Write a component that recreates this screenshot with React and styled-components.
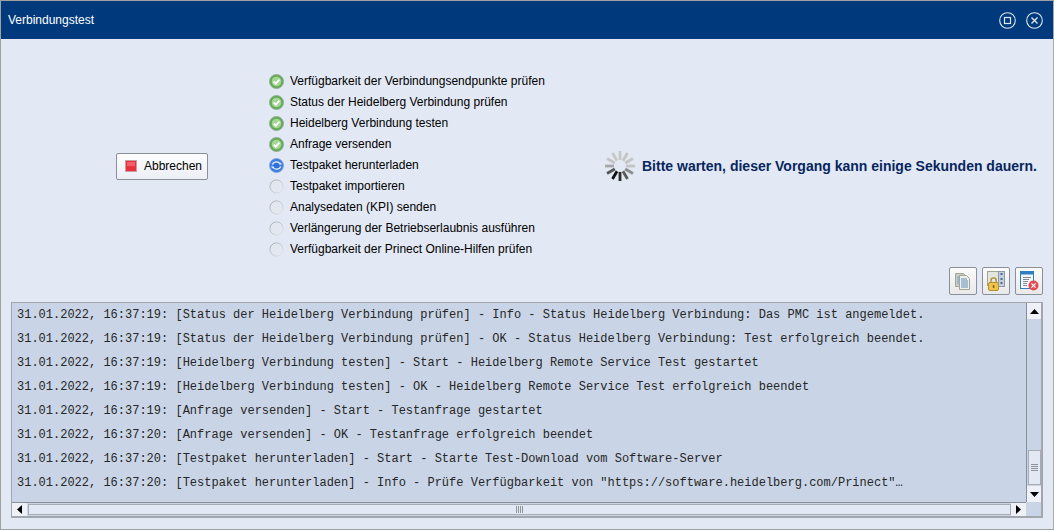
import styled, { createGlobalStyle } from "styled-components"

const GlobalStyle = createGlobalStyle`
  html, body {
    margin: 0;
    padding: 0;
    background: #e2e8f4;
  }
  * {
    box-sizing: border-box;
  }
`

const Window = styled.div`
  width: 1054px;
  height: 530px;
  display: flex;
  flex-direction: column;
  background: #e2e8f4;
  border: 1px solid #a0a0a0;
  border-right-color: #a8a8a8;
  font-family: "Liberation Sans", Arial, sans-serif;
  overflow: hidden;
`

const TitleBar = styled.div`
  height: 38px;
  flex: none;
  background: #003a7c;
  display: flex;
  align-items: center;
  justify-content: space-between;
  padding: 0 10px 0 7px;
  color: #fff;
  font-size: 12px;
`

const Title = styled.div`
  margin-top: -1px;
`

const WindowButtons = styled.div`
  display: flex;
  gap: 10px;
  margin-top: 1px;
`

const Top = styled.div`
  height: 228px;
  flex: none;
  display: flex;
  align-items: center;
  padding-top: 24px;
`

const ButtonCell = styled.div`
  width: 268px;
  flex: none;
  padding: 2px 0 0 115px;
`

const CancelButton = styled.button`
  width: 92px;
  height: 27px;
  display: flex;
  align-items: center;
  gap: 7px;
  padding: 0 0 0 8px;
  background: linear-gradient(#fdfdfe, #eceff5);
  border: 1px solid #8b8f98;
  border-radius: 2px;
  font: 12px "Liberation Sans", Arial, sans-serif;
  color: #000;
`

const Steps = styled.ul`
  list-style: none;
  margin: 0;
  padding: 0;
  width: 335px;
  flex: none;
  display: flex;
  flex-direction: column;
`

const Step = styled.li`
  height: 21px;
  display: flex;
  align-items: center;
  gap: 6px;
  font-size: 12px;
  color: #000;
  white-space: nowrap;
`

const Waiting = styled.div`
  display: flex;
  align-items: center;
  gap: 6px;
  margin-top: 2px;
  font-size: 14px;
  font-weight: bold;
  color: #08265e;
  white-space: nowrap;
`

const Toolbar = styled.div`
  display: flex;
  justify-content: flex-end;
  gap: 5px;
  padding-right: 10px;
  height: 35px;
  flex: none;
`

const ToolButton = styled.button`
  width: 28px;
  height: 28px;
  padding: 0;
  display: grid;
  place-items: center;
  background: linear-gradient(#fbfbfc, #e9e9ea);
  border: 1px solid #8b8f98;
  border-radius: 2px;
`

const LogBox = styled.div`
  margin-left: 10px;
  width: 1032px;
  height: 216px;
  flex: none;
  display: grid;
  grid-template-columns: 1fr 15px;
  grid-template-rows: 1fr 14px;
  background: #c9d5e6;
  border: 1px solid #a3a7ad;
  border-width: 1px 2px 2px 1px;
`

const LogLines = styled.div`
  overflow: hidden;
  padding: 1px 0 0 5px;
`

const LogLine = styled.div`
  height: 24px;
  line-height: 23px;
  font-family: "Liberation Mono", "Courier New", monospace;
  font-size: 12px;
  color: #262626;
  white-space: pre;
`

const VScroll = styled.div`
  display: flex;
  flex-direction: column;
  background: #c9d5e6;
  border-left: 1px solid #8b8f98;
`

const HScroll = styled.div`
  display: flex;
  background: #c9d5e6;
  border-top: 1px solid #8b8f98;
`

const Corner = styled.div`
  background: #c9d5e6;
`

const Arrow = styled.div`
  flex: none;
  width: ${(p) => (p.$horizontal ? "15px" : "auto")};
  height: ${(p) => (p.$horizontal ? "auto" : "16px")};
  background: #eef1f7;
  display: grid;
  place-items: center;
`

const Track = styled.div`
  flex: 1;
  display: flex;
  flex-direction: ${(p) => (p.$horizontal ? "row" : "column")};
  justify-content: flex-end;
  min-width: 0;
`

const Thumb = styled.div`
  flex: ${(p) => (p.$horizontal ? "1" : "none")};
  height: ${(p) => (p.$horizontal ? "auto" : "35px")};
  margin: ${(p) => (p.$horizontal ? "1px 0 1px 1px" : "0 0 1px 1px")};
  background: #e2e8f4;
  border: 1px solid #a9adb3;
  display: flex;
  flex-direction: ${(p) => (p.$horizontal ? "row" : "column")};
  align-items: center;
  justify-content: center;
  gap: 1px;
`

const Grip = styled.i`
  display: block;
  background: #8f939a;
  width: ${(p) => (p.$horizontal ? "1px" : "7px")};
  height: ${(p) => (p.$horizontal ? "7px" : "1px")};
`

const RestoreIcon = () => (
  <svg width="17" height="17" viewBox="0 0 17 17" fill="none" stroke="#dfe7f2">
    <circle cx="8.5" cy="8.5" r="7.8" strokeWidth="1.1" />
    <rect x="5.5" y="5.5" width="6" height="6" strokeWidth="1.2" />
  </svg>
)

const CloseIcon = () => (
  <svg width="17" height="17" viewBox="0 0 17 17" fill="none" stroke="#dfe7f2">
    <circle cx="8.5" cy="8.5" r="7.8" strokeWidth="1.1" />
    <path d="M5.5 5.5l6 6M11.5 5.5l-6 6" strokeWidth="1.4" />
  </svg>
)

const StopIcon = () => (
  <svg width="12" height="12" viewBox="0 0 12 12">
    <rect x="0.5" y="0.5" width="11" height="11" fill="#e8303f" stroke="#c8a0a4" />
    <rect x="2" y="2" width="8" height="4" fill="#f0606c" />
  </svg>
)

const DoneIcon = () => (
  <svg width="15" height="15" viewBox="0 0 15 15">
    <circle cx="7.5" cy="7.5" r="7" fill="#62ad52" stroke="#8fa596" strokeWidth="0.8" />
    <circle cx="7.5" cy="7.5" r="4.8" fill="#a5d698" />
    <path d="M4.7 7.6l2.1 2.1 3.6-4.1" fill="none" stroke="#fff" strokeWidth="1.9" />
  </svg>
)

const RunningIcon = () => (
  <svg width="15" height="15" viewBox="0 0 15 15">
    <circle cx="7.5" cy="7.5" r="7" fill="#3f7ee0" stroke="#7f9fd8" strokeWidth="0.8" />
    <circle cx="7.5" cy="7.5" r="2.6" fill="#2f6ed6" />
    <path d="M3.2 6.6a4.5 4.5 0 0 1 8-0.6M11.8 8.4a4.5 4.5 0 0 1-8 0.6" fill="none" stroke="#e6f0fd" strokeWidth="1.3" />
    <path d="M10 6.6h3l-1.5-2zM5 8.4h-3l1.5 2z" fill="#e6f0fd" />
  </svg>
)

const PendingIcon = () => (
  <svg width="15" height="15" viewBox="0 0 15 15">
    <defs>
      <linearGradient id="pendingRing" x1="0" y1="0" x2="1" y2="1">
        <stop offset="0" stopColor="#a6a8ac" />
        <stop offset="1" stopColor="#e4e7ee" />
      </linearGradient>
    </defs>
    <circle cx="7.5" cy="7.5" r="6.6" fill="#e3e7ef" stroke="url(#pendingRing)" strokeWidth="1" />
  </svg>
)

const spokes = ["#c4c4c4", "#c4c4c4", "#c4c4c4", "#8c8c8c", "#5a5a5a", "#2c2c2c", "#111", "#555", "#a8a8a8", "#c4c4c4", "#c8c8c8", "#c8c8c8"]

const Spinner = () => (
  <svg width="32" height="32" viewBox="0 0 32 32">
    {spokes.map((color, i) => (
      <rect key={i} x="14.6" y="1" width="2.8" height="9" fill={color} transform={`rotate(${i * 30 + 30} 16 16)`} />
    ))}
  </svg>
)

const CopyIcon = () => (
  <svg width="18" height="18" viewBox="0 0 18 18">
    <path d="M1.5 1.5h8l2 2v11h-10z" fill="#c5cdd3" stroke="#a5a68f" />
    <path d="M5.5 3.5h7l3 3v11h-10z" fill="#eef0f0" stroke="#a5a68f" />
    <path d="M7 7h6M7 9h7M7 11h7M7 13h7M7 15h7" stroke="#5f8bb5" strokeWidth="1" />
    <path d="M3 5h2M3 7h2M3 9h2M3 11h2" stroke="#7ba0c4" strokeWidth="1" />
  </svg>
)

const LockIcon = () => (
  <svg width="20" height="20" viewBox="0 0 20 20">
    <rect x="1.5" y="0.5" width="12" height="14" fill="#e4e6dd" stroke="#a5a68f" />
    <rect x="12.5" y="0.5" width="6" height="15" fill="#c3cede" stroke="#8d99ab" />
    <rect x="14.5" y="2" width="2" height="2" fill="#4c6a94" />
    <rect x="14.5" y="7" width="2" height="2" fill="#4c6a94" />
    <rect x="14.5" y="11" width="2" height="2" fill="#4c6a94" />
    <path d="M5 12V9.5a2.6 2.6 0 0 1 5.2 0V12" fill="none" stroke="#a68b35" strokeWidth="1.3" />
    <rect x="2.5" y="11.5" width="10" height="8" rx="1.5" fill="#eec44f" stroke="#b48f2a" />
    <rect x="6.8" y="14" width="1.6" height="3" fill="#8a6a14" />
  </svg>
)

const ClearIcon = () => (
  <svg width="20" height="20" viewBox="0 0 20 20">
    <rect x="1.5" y="0.5" width="13" height="17" fill="#f5f7f9" stroke="#2f7fc0" />
    <rect x="1.5" y="0.5" width="13" height="3" fill="#2f7fc0" />
    <path d="M4 6.5h8M4 8.5h6M4 10.5h5M4 12.5h4M4 14.5h4" stroke="#7f8a96" />
    <circle cx="14.5" cy="14.5" r="5" fill="#e8474f" />
    <path d="M12.4 12.4l4.2 4.2M16.6 12.4l-4.2 4.2" stroke="#fff" strokeWidth="1.3" />
  </svg>
)

const ArrowGlyph = ({ dir }) => {
  const points = {
    up: "0,5 9,5 4.5,0",
    down: "0,0 9,0 4.5,5",
    left: "5,0 5,9 0,4.5",
    right: "0,0 0,9 5,4.5",
  }
  const sideways = dir === "left" || dir === "right"
  return (
    <svg width={sideways ? 5 : 9} height={sideways ? 9 : 5}>
      <polygon points={points[dir]} fill="#000" />
    </svg>
  )
}

const steps = [
  ["Verfügbarkeit der Verbindungsendpunkte prüfen", "done"],
  ["Status der Heidelberg Verbindung prüfen", "done"],
  ["Heidelberg Verbindung testen", "done"],
  ["Anfrage versenden", "done"],
  ["Testpaket herunterladen", "running"],
  ["Testpaket importieren", "pending"],
  ["Analysedaten (KPI) senden", "pending"],
  ["Verlängerung der Betriebserlaubnis ausführen", "pending"],
  ["Verfügbarkeit der Prinect Online-Hilfen prüfen", "pending"],
]

const stepIcons = { done: DoneIcon, running: RunningIcon, pending: PendingIcon }

const logLines = [
  "31.01.2022, 16:37:19: [Status der Heidelberg Verbindung prüfen] - Info - Status Heidelberg Verbindung: Das PMC ist angemeldet.",
  "31.01.2022, 16:37:19: [Status der Heidelberg Verbindung prüfen] - OK - Status Heidelberg Verbindung: Test erfolgreich beendet.",
  "31.01.2022, 16:37:19: [Heidelberg Verbindung testen] - Start - Heidelberg Remote Service Test gestartet",
  "31.01.2022, 16:37:19: [Heidelberg Verbindung testen] - OK - Heidelberg Remote Service Test erfolgreich beendet",
  "31.01.2022, 16:37:19: [Anfrage versenden] - Start - Testanfrage gestartet",
  "31.01.2022, 16:37:20: [Anfrage versenden] - OK - Testanfrage erfolgreich beendet",
  "31.01.2022, 16:37:20: [Testpaket herunterladen] - Start - Starte Test-Download vom Software-Server",
  "31.01.2022, 16:37:20: [Testpaket herunterladen] - Info - Prüfe Verfügbarkeit von \"https://software.heidelberg.com/Prinect\"…",
]

const App = () => {
  return (
    <Window>
      <GlobalStyle />
      <TitleBar>
        <Title>Verbindungstest</Title>
        <WindowButtons>
          <RestoreIcon />
          <CloseIcon />
        </WindowButtons>
      </TitleBar>
      <Top>
        <ButtonCell>
          <CancelButton>
            <StopIcon />
            Abbrechen
          </CancelButton>
        </ButtonCell>
        <Steps>
          {steps.map(([label, state]) => {
            const Icon = stepIcons[state]
            return (
              <Step key={label}>
                <Icon />
                {label}
              </Step>
            )
          })}
        </Steps>
        <Waiting>
          <Spinner />
          Bitte warten, dieser Vorgang kann einige Sekunden dauern.
        </Waiting>
      </Top>
      <Toolbar>
        <ToolButton><CopyIcon /></ToolButton>
        <ToolButton><LockIcon /></ToolButton>
        <ToolButton><ClearIcon /></ToolButton>
      </Toolbar>
      <LogBox>
        <LogLines>
          {logLines.map((line, i) => (
            <LogLine key={i}>{line}</LogLine>
          ))}
        </LogLines>
        <VScroll>
          <Arrow><ArrowGlyph dir="up" /></Arrow>
          <Track>
            <Thumb>
              <Grip /><Grip /><Grip /><Grip />
            </Thumb>
          </Track>
          <Arrow><ArrowGlyph dir="down" /></Arrow>
        </VScroll>
        <HScroll>
          <Arrow $horizontal><ArrowGlyph dir="left" /></Arrow>
          <Track $horizontal>
            <Thumb $horizontal>
              <Grip $horizontal /><Grip $horizontal /><Grip $horizontal /><Grip $horizontal />
            </Thumb>
          </Track>
          <Arrow $horizontal><ArrowGlyph dir="right" /></Arrow>
        </HScroll>
        <Corner />
      </LogBox>
    </Window>
  )
}

export default App
